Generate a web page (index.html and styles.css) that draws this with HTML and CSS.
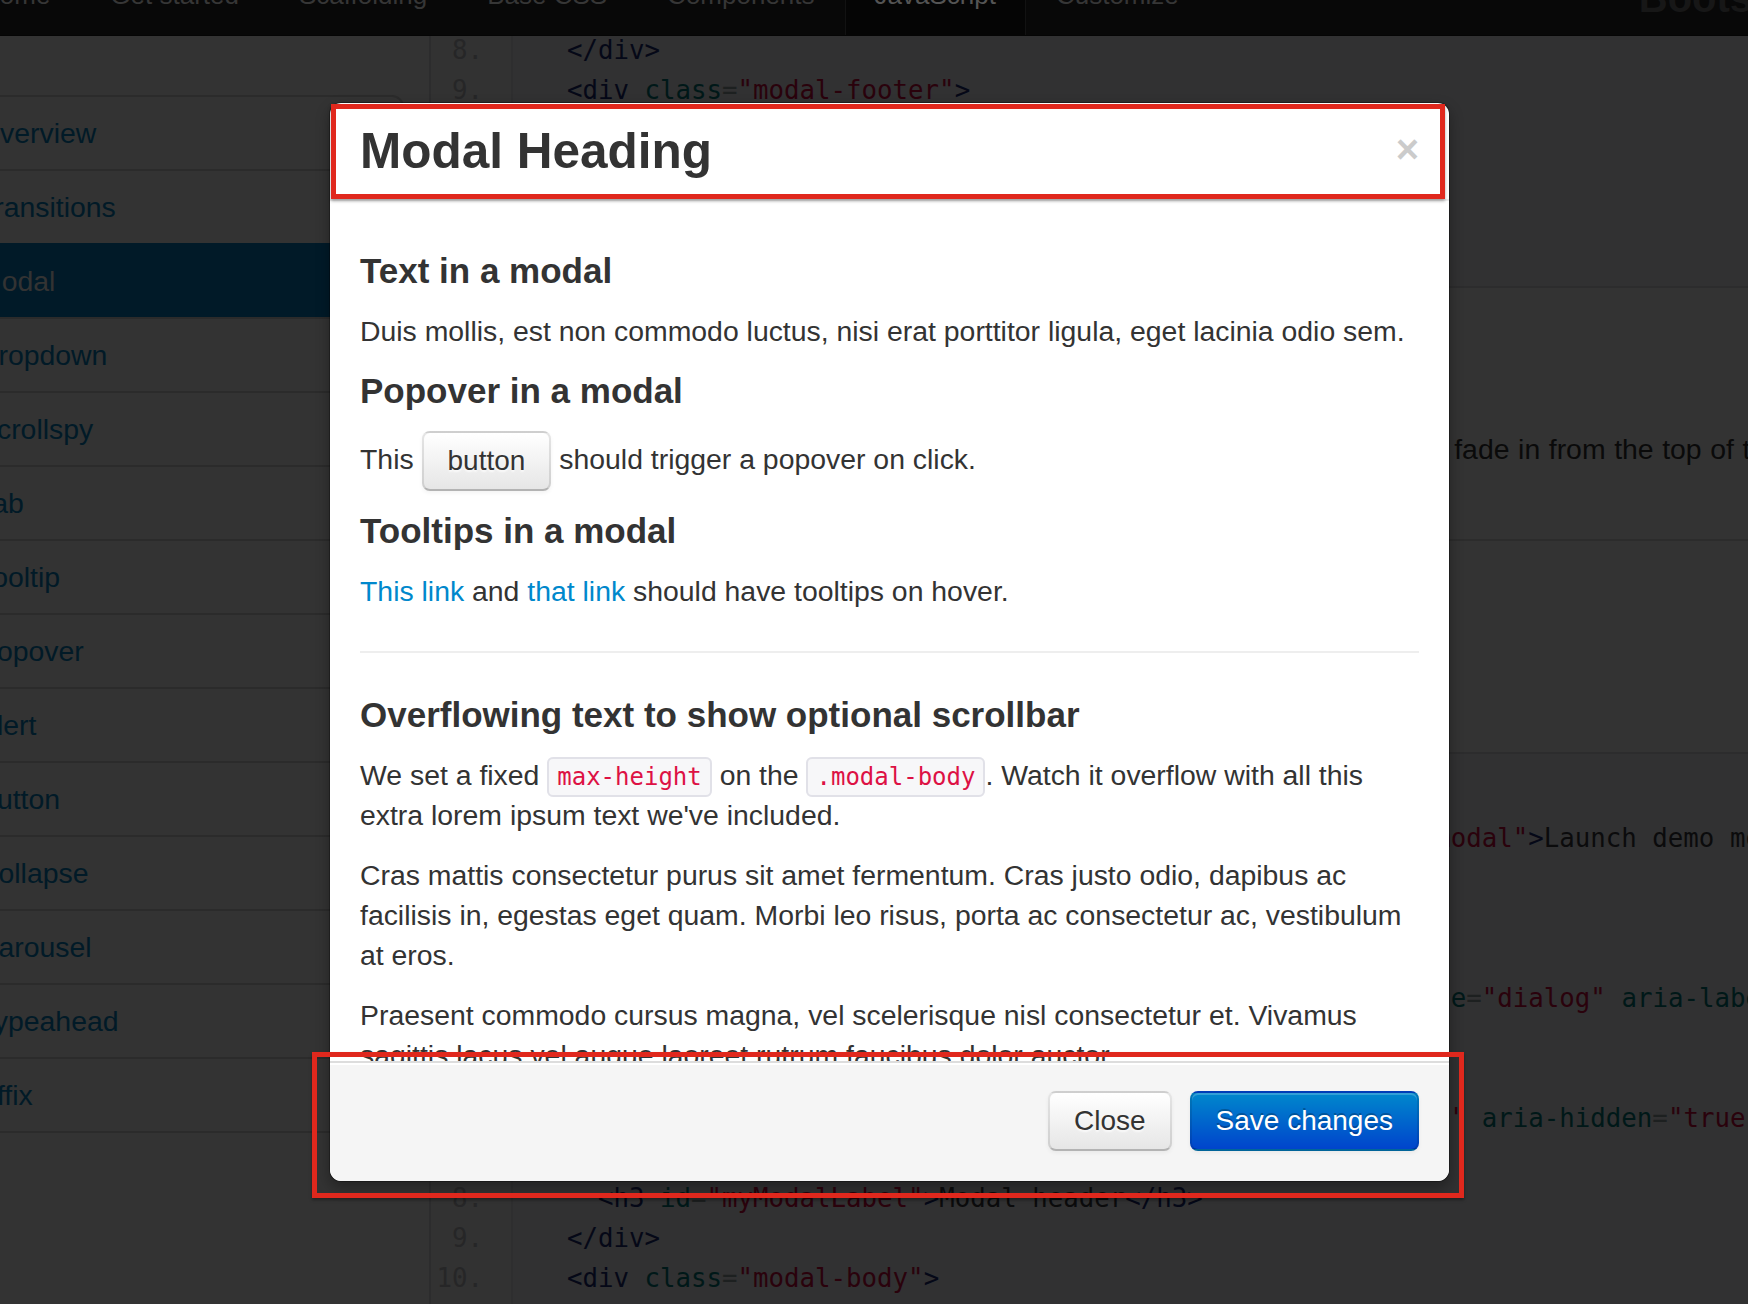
FILE: index.html
```html
<!DOCTYPE html>
<html lang="en">
<head>
<meta charset="utf-8">
<title>Modal – Bootstrap JavaScript</title>
<link rel="stylesheet" href="styles.css">
</head>
<body>
<div class="screen">
  <header class="navbar">
    <ul class="nav">
      <li><a href="#">Home</a></li>
      <li><a href="#">Get started</a></li>
      <li><a href="#">Scaffolding</a></li>
      <li><a href="#">Base CSS</a></li>
      <li><a href="#">Components</a></li>
      <li class="active"><a href="#">JavaScript</a></li>
      <li><a href="#">Customize</a></li>
    </ul>
    <a class="brand" href="#">Bootstrap</a>
  </header>

  <div class="page">
    <aside class="side">
      <ul class="sidenav">
        <li><a href="#">Overview</a></li>
        <li><a href="#">Transitions</a></li>
        <li class="active"><a href="#">Modal</a></li>
        <li><a href="#">Dropdown</a></li>
        <li><a href="#">Scrollspy</a></li>
        <li><a href="#">Tab</a></li>
        <li><a href="#">Tooltip</a></li>
        <li><a href="#">Popover</a></li>
        <li><a href="#">Alert</a></li>
        <li><a href="#">Button</a></li>
        <li><a href="#">Collapse</a></li>
        <li><a href="#">Carousel</a></li>
        <li><a href="#">Typeahead</a></li>
        <li><a href="#">Affix</a></li>
      </ul>
    </aside>

    <main class="content">
      <div class="code code-top">
<div class="line"><span class="ln">8.</span><span class="src">  <span class="tag">&lt;/div&gt;</span></span></div>
<div class="line"><span class="ln">9.</span><span class="src">  <span class="tag">&lt;div</span> <span class="atn">class</span><span class="pun">=</span><span class="atv">"modal-footer"</span><span class="tag">&gt;</span></span></div>
<div class="line"><span class="ln">10.</span><span class="src">    <span class="tag">&lt;a</span> <span class="atn">href</span><span class="pun">=</span><span class="atv">"#"</span> <span class="atn">class</span><span class="pun">=</span><span class="atv">"btn"</span><span class="tag">&gt;</span>Close<span class="tag">&lt;/a&gt;</span></span></div>
<div class="line"><span class="ln">11.</span><span class="src">    <span class="tag">&lt;a</span> <span class="atn">href</span><span class="pun">=</span><span class="atv">"#"</span> <span class="atn">class</span><span class="pun">=</span><span class="atv">"btn btn-primary"</span><span class="tag">&gt;</span>Save changes<span class="tag">&lt;/a&gt;</span></span></div>
<div class="line"><span class="ln">12.</span><span class="src">  <span class="tag">&lt;/div&gt;</span></span></div>
<div class="line"><span class="ln">13.</span><span class="src"><span class="tag">&lt;/div&gt;</span></span></div>
      </div>

      <h2 class="section-title">Live demo</h2>
      <p class="lead-text">Toggle a modal via JavaScript by clicking the button below. It will slide down and fade in from the top of the page.</p>

      <div class="example">
        <a class="demo-btn" href="#">Launch demo modal</a>
      </div>
      <div class="code code-bottom">
<div class="line"><span class="ln">1.</span><span class="src"><span class="com">&lt;!-- Button to trigger modal --&gt;</span></span></div>
<div class="line"><span class="ln">2.</span><span class="src"><span class="tag">&lt;a</span> <span class="atn">href</span><span class="pun">=</span><span class="atv">"#myModal"</span> <span class="atn">role</span><span class="pun">=</span><span class="atv">"button"</span> <span class="atn">class</span><span class="pun">=</span><span class="atv">"btn"</span> <span class="atn">data-toggle</span><span class="pun">=</span><span class="atv">"modal"</span><span class="tag">&gt;</span>Launch demo modal<span class="tag">&lt;/a&gt;</span></span></div>
<div class="line"><span class="ln">3.</span><span class="src"> </span></div>
<div class="line"><span class="ln">4.</span><span class="src"><span class="com">&lt;!-- Modal --&gt;</span></span></div>
<div class="line"><span class="ln">5.</span><span class="src"><span class="tag">&lt;div</span> <span class="atn">id</span><span class="pun">=</span><span class="atv">"myModal"</span> <span class="atn">class</span><span class="pun">=</span><span class="atv">"modal hide fade"</span> <span class="atn">tabindex</span><span class="pun">=</span><span class="atv">"-1"</span> <span class="atn">role</span><span class="pun">=</span><span class="atv">"dialog"</span> <span class="atn">aria-labelledby</span><span class="pun">=</span><span class="atv">"myModalLabel"</span> <span class="atn">aria-hidden</span><span class="pun">=</span><span class="atv">"true"</span><span class="tag">&gt;</span></span></div>
<div class="line"><span class="ln">6.</span><span class="src">  <span class="tag">&lt;div</span> <span class="atn">class</span><span class="pun">=</span><span class="atv">"modal-header"</span><span class="tag">&gt;</span></span></div>
<div class="line"><span class="ln">7.</span><span class="src">    <span class="tag">&lt;button</span> <span class="atn">type</span><span class="pun">=</span><span class="atv">"button"</span> <span class="atn">class</span><span class="pun">=</span><span class="atv">"close"</span> <span class="atn">data-dismiss</span><span class="pun">=</span><span class="atv">"modal"</span> <span class="atn">aria-hidden</span><span class="pun">=</span><span class="atv">"true"</span><span class="tag">&gt;</span>×<span class="tag">&lt;/button&gt;</span></span></div>
<div class="line"><span class="ln">8.</span><span class="src">    <span class="tag">&lt;h3</span> <span class="atn">id</span><span class="pun">=</span><span class="atv">"myModalLabel"</span><span class="tag">&gt;</span>Modal header<span class="tag">&lt;/h3&gt;</span></span></div>
<div class="line"><span class="ln">9.</span><span class="src">  <span class="tag">&lt;/div&gt;</span></span></div>
<div class="line"><span class="ln">10.</span><span class="src">  <span class="tag">&lt;div</span> <span class="atn">class</span><span class="pun">=</span><span class="atv">"modal-body"</span><span class="tag">&gt;</span></span></div>
<div class="line"><span class="ln">11.</span><span class="src">    <span class="tag">&lt;p&gt;</span>One fine body…<span class="tag">&lt;/p&gt;</span></span></div>
<div class="line"><span class="ln">12.</span><span class="src">  <span class="tag">&lt;/div&gt;</span></span></div>
      </div>
    </main>
  </div>

  <div class="modal" role="dialog" aria-labelledby="modalTitle">
    <div class="modal-header">
      <button type="button" class="close" aria-hidden="true">×</button>
      <h3 id="modalTitle">Modal Heading</h3>
    </div>
    <div class="modal-body">
      <h4>Text in a modal</h4>
      <p>Duis mollis, est non commodo luctus, nisi erat porttitor ligula, eget lacinia odio sem.</p>
      <h4>Popover in a modal</h4>
      <p>This <a href="#" class="btn">button</a> should trigger a popover on click.</p>
      <h4>Tooltips in a modal</h4>
      <p><a href="#" class="link">This link</a> and <a href="#" class="link">that link</a> should have tooltips on hover.</p>
      <hr>
      <h4>Overflowing text to show optional scrollbar</h4>
      <p>We set a fixed <code>max-height</code> on the <code>.modal-body</code>. Watch it overflow with all this extra lorem ipsum text we've included.</p>
      <p>Cras mattis consectetur purus sit amet fermentum. Cras justo odio, dapibus ac facilisis in, egestas eget quam. Morbi leo risus, porta ac consectetur ac, vestibulum at eros.</p>
      <p>Praesent commodo cursus magna, vel scelerisque nisl consectetur et. Vivamus sagittis lacus vel augue laoreet rutrum faucibus dolor auctor.</p>
      <p>Aenean lacinia bibendum nulla sed consectetur. Praesent commodo cursus magna, vel scelerisque nisl consectetur et. Donec sed odio dui. Donec ullamcorper nulla non metus auctor fringilla.</p>
    </div>
    <div class="modal-footer">
      <button type="button" class="btn">Close</button>
      <button type="button" class="btn btn-primary">Save changes</button>
    </div>
  </div>

  <div class="mark mark-header"></div>
  <div class="mark mark-footer"></div>
</div>
</body>
</html>
```

FILE: styles.css
```css
* {
  box-sizing: border-box;
}

html,
body {
  margin: 0;
  padding: 0;
}

body {
  background: #333333;
  font-family: "Liberation Sans", Arial, Helvetica, sans-serif;
  font-size: 28.4px;
  line-height: 40px;
  color: #333333;
}

a {
  text-decoration: none;
}

.screen {
  position: relative;
  width: 1748px;
  height: 1304px;
  overflow: hidden;
  background: #333333;
}

/* ---------- dimmed navbar (fixed at top) ---------- */
.navbar {
  position: absolute;
  top: 0;
  left: 0;
  right: 0;
  height: 36px;
  z-index: 2;
  display: flex;
  align-items: flex-start;
  overflow: hidden;
  background: #080808;
  border-bottom: 1px solid #050505;
}

.nav {
  display: flex;
  flex: none;
  list-style: none;
  margin: -25px 0 0 -49px;
  padding: 0;
}

.nav a {
  display: block;
  padding: 0 30px 21px;
  font-size: 26px;
  line-height: 40px;
  color: #363636;
  white-space: nowrap;
}

.nav .active a {
  color: #545454;
  background: #050505;
  box-shadow: inset 1px 0 0 #121212, inset -1px 0 0 #121212;
}

.brand {
  flex: none;
  margin: -22px 0 0 430px;
  font-size: 40px;
  font-weight: bold;
  line-height: 40px;
  color: #171717;
  white-space: nowrap;
}

/* ---------- page behind the backdrop ---------- */
.page {
  display: flex;
  align-items: flex-start;
  margin-left: -52px;
}

.side {
  flex: none;
  width: 456px;
  margin-right: 25px;
  padding-top: 95px;
}

.sidenav {
  list-style: none;
  margin: 0;
  padding: 0;
}

.sidenav a {
  display: block;
  padding: 16px 28px;
  margin-bottom: -2px;
  border: 2px solid #2b2b2b;
  color: #011a27;
  line-height: 40px;
}

.sidenav li:first-child a {
  border-radius: 12px 12px 0 0;
}

.sidenav li:last-child a {
  border-radius: 0 0 12px 12px;
}

.sidenav .active a {
  background: #011a28;
  border-color: #011a28;
  color: #333333;
}

.content {
  flex: none;
  width: 1400px;
}

.code {
  border: 2px solid #2c2c2d;
  background: linear-gradient(to right, #323232 0 80px, #2e2e2f 80px 82px, #313132 82px);
  font-family: "DejaVu Sans Mono", "Liberation Mono", monospace;
  font-size: 25.75px;
  line-height: 40px;
  color: #0b0b0c;
}

.code-top {
  padding: 28px 0 16px;
  margin-bottom: 40px;
  border-radius: 0 0 8px 8px;
}

.code-bottom {
  padding: 24px 0 19px;
}

.line {
  display: flex;
}

.ln {
  flex: none;
  width: 82px;
  padding-right: 30px;
  text-align: right;
  color: #262627;
}

.src {
  flex: 1;
  min-width: 0;
  padding: 0 19px 0 23px;
  white-space: pre-wrap;
  word-break: break-all;
}

.tag { color: #050817; }
.atn { color: #001818; }
.pun { color: #1d2020; }
.atv { color: #2a020c; }
.com { color: #1d2020; }

.section-title {
  margin: 0 0 21px;
  font-size: 63px;
  line-height: 80px;
  color: #0a0a0a;
}

.lead-text {
  margin: 0;
  color: #0a0a0a;
  word-spacing: 0.7px;
}

.example {
  height: 213px;
  margin-top: 30px;
  padding: 78px 38px 28px;
  border: 2px solid #2c2c2c;
  border-bottom: 0;
  border-radius: 8px 8px 0 0;
}

.demo-btn {
  display: inline-block;
  padding: 8px 24px;
  border: 2px solid #282828;
  border-radius: 8px;
  color: #0a0a0a;
  background: #303030;
}

/* ---------- modal ---------- */
.modal {
  position: absolute;
  left: 329px;
  top: 102px;
  z-index: 3;
  width: 1121px;
  background: #ffffff;
  border: 1px solid rgba(0, 0, 0, 0.3);
  border-radius: 12px;
  box-shadow: 0 6px 14px rgba(0, 0, 0, 0.3);
  background-clip: padding-box;
}

.modal-header {
  padding: 18px 30px;
  border-bottom: 2px solid #eeeeee;
}

.modal-header h3 {
  margin: 0;
  font-size: 49.5px;
  line-height: 60px;
  font-weight: bold;
  color: #333333;
}

.close {
  float: right;
  margin-top: 8px;
  padding: 0;
  border: 0;
  background: none;
  font-family: "Liberation Sans", Arial, sans-serif;
  font-size: 40px;
  font-weight: bold;
  line-height: 40px;
  color: #000000;
  opacity: 0.2;
  text-shadow: 0 2px 0 #ffffff;
  cursor: pointer;
}

.modal-body {
  box-sizing: content-box;
  height: 800px;
  padding: 30px;
  overflow: hidden;
}

.modal-body h4 {
  margin: 20px 0;
  font-size: 35px;
  line-height: 40px;
  font-weight: bold;
  color: #333333;
}

.modal-body p {
  margin: 0 0 20px;
}

.link {
  color: #0088cc;
}

.modal-body hr {
  margin: 40px 0;
  border: 0;
  border-top: 2px solid #eeeeee;
  border-bottom: 2px solid #ffffff;
}

code {
  padding: 4px 8px;
  font-family: "DejaVu Sans Mono", "Liberation Mono", monospace;
  font-size: 24px;
  line-height: 20px;
  color: #dd1144;
  background: #f7f7f9;
  border: 2px solid #e1e1e8;
  border-radius: 6px;
  white-space: nowrap;
}

.btn {
  display: inline-block;
  padding: 8px 24px;
  margin: 0;
  font-family: "Liberation Sans", Arial, Helvetica, sans-serif;
  font-size: 28px;
  line-height: 40px;
  color: #333333;
  text-align: center;
  vertical-align: middle;
  text-shadow: 0 2px 2px rgba(255, 255, 255, 0.75);
  background-color: #f5f5f5;
  background-image: linear-gradient(to bottom, #ffffff, #e6e6e6);
  border: 2px solid #cccccc;
  border-color: rgba(0, 0, 0, 0.1) rgba(0, 0, 0, 0.1) rgba(0, 0, 0, 0.25);
  border-bottom-color: #b3b3b3;
  border-radius: 8px;
  box-shadow: inset 0 2px 0 rgba(255, 255, 255, 0.2), 0 2px 4px rgba(0, 0, 0, 0.05);
  cursor: pointer;
}

.btn-primary {
  color: #ffffff;
  text-shadow: 0 -2px 0 rgba(0, 0, 0, 0.25);
  background-color: #006dcc;
  background-image: linear-gradient(to bottom, #0088cc, #0044cc);
  border-color: rgba(0, 0, 0, 0.1) rgba(0, 0, 0, 0.1) rgba(0, 0, 0, 0.25);
}

.modal-footer {
  padding: 28px 30px 30px;
  text-align: right;
  background: #f5f5f5;
  border-top: 2px solid #dddddd;
  border-radius: 0 0 12px 12px;
  box-shadow: inset 0 2px 0 #ffffff;
}

.modal-footer .btn + .btn {
  margin-left: 10px;
}

/* ---------- red annotation frames ---------- */
.mark {
  position: absolute;
  z-index: 4;
  border: 5px solid #e0281d;
  box-shadow: 0 2px 3px rgba(0, 0, 0, 0.35);
  pointer-events: none;
}

.mark-header {
  left: 331px;
  top: 104px;
  width: 1114px;
  height: 95px;
}

.mark-footer {
  left: 312px;
  top: 1052px;
  width: 1152px;
  height: 146px;
}
```
